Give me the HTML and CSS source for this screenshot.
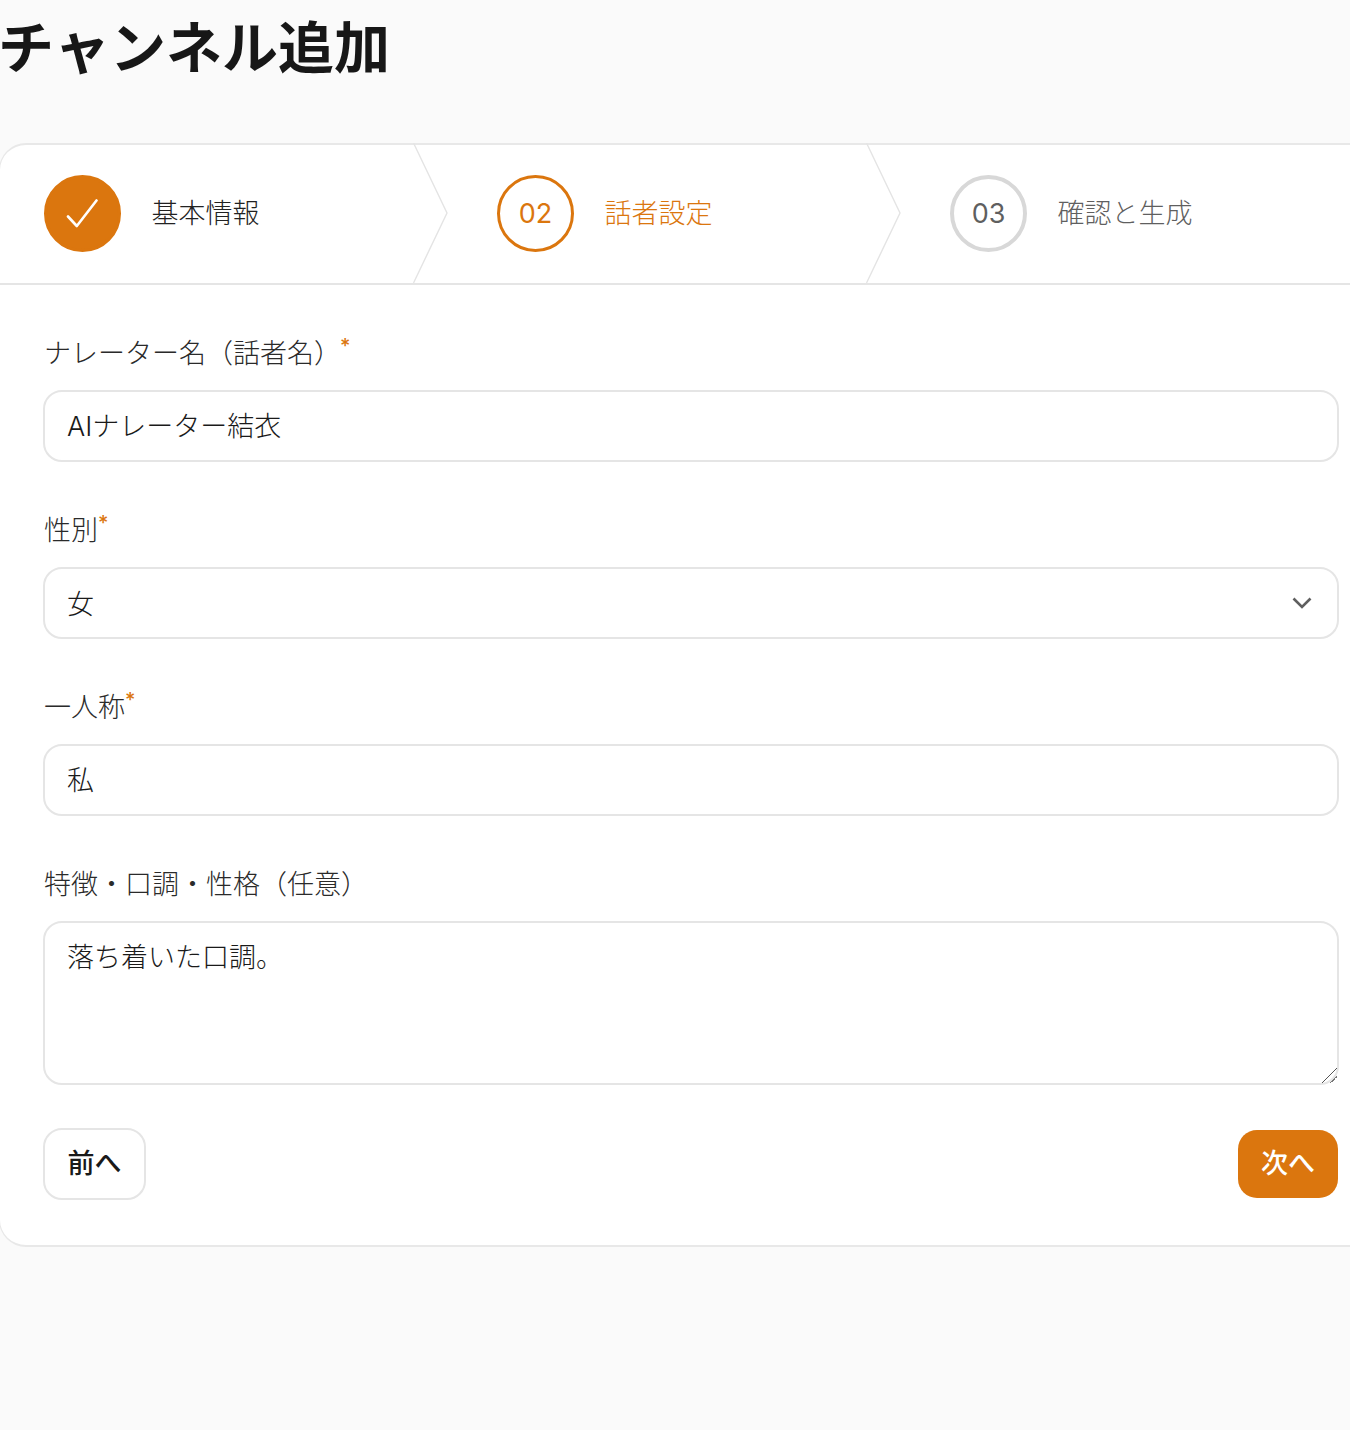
FILE: index.html
```html
<!DOCTYPE html>
<html lang="ja">
<head>
<meta charset="utf-8">
<title>チャンネル追加</title>
<link rel="stylesheet" href="styles.css">
</head>
<body>
<main class="page">
  <h1 class="title">チャンネル追加</h1>
  <section class="card">
    <ol class="steps">
      <li class="step step-done">
        <span class="badge">
          <svg class="check" viewBox="0 0 32 30" width="32" height="30" aria-hidden="true"><path d="M2 17.5 10.8 27 30.5 1.5" fill="none" stroke="#fff" stroke-width="2.6" stroke-linecap="round" stroke-linejoin="round"/></svg>
        </span>
        <span class="step-label">基本情報</span>
        <svg class="chevron" viewBox="0 0 35 140" width="35" height="140" aria-hidden="true"><path d="M.5 0 34 70 .5 140" fill="none" stroke="#e4e4e4" stroke-width="1.4"/></svg>
      </li>
      <li class="step step-current">
        <span class="badge">02</span>
        <span class="step-label">話者設定</span>
        <svg class="chevron" viewBox="0 0 35 140" width="35" height="140" aria-hidden="true"><path d="M.5 0 34 70 .5 140" fill="none" stroke="#e4e4e4" stroke-width="1.4"/></svg>
      </li>
      <li class="step step-todo">
        <span class="badge">03</span>
        <span class="step-label">確認と生成</span>
      </li>
    </ol>
    <form class="form">
      <div class="field">
        <label class="label" for="name">ナレーター名（話者名）<span class="req">*</span></label>
        <input class="control" id="name" type="text" value="AIナレーター結衣">
      </div>
      <div class="field">
        <label class="label" for="gender">性別<span class="req">*</span></label>
        <div class="select-wrap">
          <select class="control select" id="gender"><option>女</option><option>男</option></select>
          <svg class="caret" viewBox="0 0 20 12" width="20" height="12" aria-hidden="true"><path d="M1.5 1.5 10 10 18.5 1.5" fill="none" stroke="#5f5f5f" stroke-width="2.6"/></svg>
        </div>
      </div>
      <div class="field">
        <label class="label" for="first">一人称<span class="req">*</span></label>
        <input class="control" id="first" type="text" value="私">
      </div>
      <div class="field">
        <label class="label" for="traits">特徴・口調・性格（任意）</label>
        <textarea class="control area" id="traits">落ち着いた口調。</textarea>
      </div>
      <div class="actions">
        <button class="btn btn-ghost" type="button">前へ</button>
        <button class="btn btn-primary" type="button">次へ</button>
      </div>
    </form>
  </section>
</main>
</body>
</html>
```
FILE: styles.css
```css
* { box-sizing: border-box; }
html, body { margin: 0; height: 1430px; overflow: hidden; }
body {
  background: #fafafa;
  color: #1f1f1f;
  font-family: Inter, "Noto Sans CJK JP", sans-serif;
  font-size: 27px;
  font-kerning: none;
}
.page { width: 1350px; }
.title {
  margin: 0 0 0 -2px;
  height: 143px;
  padding-top: 8px;
  font-size: 56px;
  line-height: 80px;
  font-weight: 700;
  color: #171717;
}
.card {
  width: 1380px;
  height: 1104px;
  margin-left: -1px;
  background: #fff;
  border: 2px solid #e8e8e8;
  border-left-width: 1px;
  border-radius: 27px;
}
.steps {
  display: flex;
  margin: 0;
  padding: 0 0 1px;
  height: 140px;
  list-style: none;
  border-bottom: 2px solid #e5e5e5;
}
.step {
  position: relative;
  width: 453px;
  padding-left: 44px;
  display: flex;
  align-items: center;
  gap: 30.5px;
}
.badge {
  width: 77px;
  height: 77px;
  flex: none;
  border-radius: 50%;
  display: flex;
  align-items: center;
  justify-content: center;
  padding-bottom: 1px;
  font-weight: 400;
  border: 3px solid #db760e;
  color: #db760e;
}
.step-done .badge { background: #db760e; }
.step-todo .badge { border: 4px solid #d8d8d8; color: #5f5f5f; }
.check { margin-top: 1px; margin-left: -1px; }
.step-label { padding-bottom: 5px; color: #222; font-weight: 300; }
.step-current .step-label { color: #db760e; }
.step-todo .step-label { color: #5f5f5f; }
.chevron {
  position: absolute;
  right: 5px;
  top: -2px;
}
.form {
  display: flex;
  flex-direction: column;
  gap: 46px;
  padding: 46px 0 0 43px;
  width: 1338px;
}
.label {
  display: block;
  height: 40px;
  line-height: 45px;
  margin-bottom: 19px;
  padding-left: 1px;
  color: #2a2a2a;
  font-weight: 300;
}
.req {
  display: inline-block;
  color: #db760e;
  font-size: 20px;
  font-weight: 500;
  line-height: 20px;
  vertical-align: 10px;
}
.field:first-child .req { margin-left: -1px; }
.control {
  display: block;
  width: 1296px;
  height: 72px;
  padding: 0 22px 3px;
  background: #fff;
  border: 2px solid #e5e5e5;
  border-radius: 19px;
  font: inherit;
  font-weight: 300;
  color: #1a1a1a;
  outline: none;
}
.select-wrap { position: relative; }
.select { appearance: none; padding: 3px 22px 0; }
.caret {
  position: absolute;
  right: 26px;
  top: 30px;
}
.area {
  height: 164px;
  padding: 15px 22px;
  line-height: 40px;
  resize: vertical;
}
.area::-webkit-resizer {
  background:
    linear-gradient(135deg, transparent 47%, #555 47% 53%, transparent 53%),
    linear-gradient(135deg, transparent 75%, #777 75% 80%, transparent 80%);
}
.actions {
  display: flex;
  justify-content: space-between;
  align-items: center;
  margin-top: -3px;
  width: 1295px;
}
.btn {
  font: inherit;
  font-weight: 500;
  border-radius: 19px;
  padding: 0 0 5px;
}
.btn-ghost {
  width: 103px;
  height: 72px;
  background: #fff;
  border: 2px solid #e5e5e5;
  color: #1a1a1a;
}
.btn-primary {
  width: 100px;
  height: 68px;
  background: #db760e;
  border: 0;
  color: #fff;
}
```
